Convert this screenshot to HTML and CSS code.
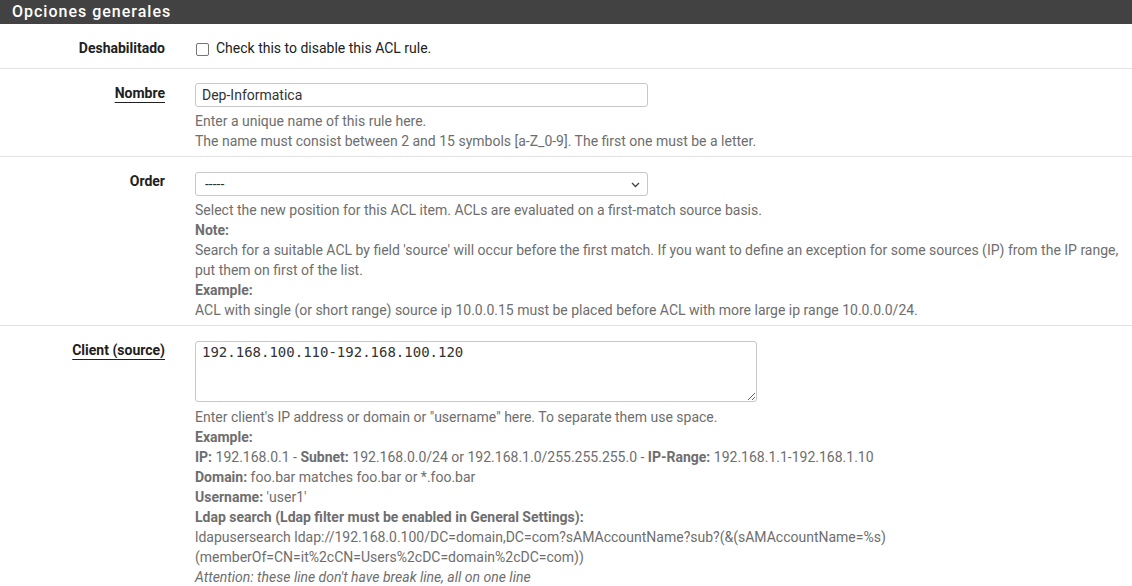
FILE: index.html
```html
<!DOCTYPE html>
<html lang="es">
<head>
<meta charset="utf-8">
<title>Opciones generales</title>
<link rel="stylesheet" href="styles.css">
</head>
<body>
<div class="panel">
  <div class="panel-heading">Opciones generales</div>
  <div class="panel-body">
    <div class="form-row">
      <div class="label-col"><span class="label">Deshabilitado</span></div>
      <div class="content-col check-col">
        <label class="check"><input type="checkbox" class="cb"> Check this to disable this ACL rule.</label>
      </div>
    </div>
    <div class="form-row">
      <div class="label-col"><span class="label req">Nombre</span></div>
      <div class="content-col">
        <input type="text" class="field" value="Dep-Informatica">
        <div class="help">
          Enter a unique name of this rule here.<br>
          The name must consist between 2 and 15 symbols [a-Z_0-9]. The first one must be a letter.
        </div>
      </div>
    </div>
    <div class="form-row">
      <div class="label-col"><span class="label">Order</span></div>
      <div class="content-col">
        <div class="select-wrap">
          <select class="field select"><option>-----</option></select>
          <svg class="chev" width="9" height="6" viewBox="0 0 9 6"><path d="M1 1l3.5 3.5L8 1" fill="none" stroke="#444" stroke-width="1.3"/></svg>
        </div>
        <div class="help">
          Select the new position for this ACL item. ACLs are evaluated on a first-match source basis.<br>
          <b>Note:</b><br>
          Search for a suitable ACL by field 'source' will occur before the first match. If you want to define an exception for some sources (IP) from the IP range, put them on first of the list.<br>
          <b>Example:</b><br>
          ACL with single (or short range) source ip 10.0.0.15 must be placed before ACL with more large ip range 10.0.0.0/24.
        </div>
      </div>
    </div>
    <div class="form-row last">
      <div class="label-col"><span class="label req">Client (source)</span></div>
      <div class="content-col">
        <textarea class="area">192.168.100.110-192.168.100.120</textarea>
        <div class="help help-area">
          Enter client's IP address or domain or "username" here. To separate them use space.<br>
          <b>Example:</b><br>
          <b>IP:</b> 192.168.0.1 - <b>Subnet:</b> 192.168.0.0/24 or 192.168.1.0/255.255.255.0 - <b>IP-Range:</b> 192.168.1.1-192.168.1.10<br>
          <b>Domain:</b> foo.bar matches foo.bar or *.foo.bar<br>
          <b>Username:</b> 'user1'<br>
          <b>Ldap search (Ldap filter must be enabled in General Settings):</b><br>
          ldapusersearch ldap://192.168.0.100/DC=domain,DC=com?sAMAccountName?sub?(&amp;(sAMAccountName=%s)(memberOf=CN=it%2cCN=Users%2cDC=domain%2cDC=com))<br>
          <i>Attention: these line don't have break line, all on one line</i>
        </div>
      </div>
    </div>
  </div>
</div>
</body>
</html>
```
FILE: styles.css
```css
html, body {
  margin: 0;
  padding: 0;
  background: #fff;
}
body {
  font-family: Roboto, "Liberation Sans", sans-serif;
  font-size: 14px;
  line-height: 20px;
  color: #212121;
}
.panel-heading {
  background: #424242;
  color: #fff;
  height: 24px;
  line-height: 24px;
  padding: 0 12px;
  font-size: 16px;
  font-weight: 500;
  letter-spacing: 1px;
}
.form-row {
  display: flex;
  padding: 14px 0 5px;
  border-bottom: 1px solid #e2e2e2;
}
.form-row.last {
  border-bottom: none;
}
.label-col {
  width: 165px;
  flex: none;
  text-align: right;
  margin-right: 30px;
}
.label {
  font-weight: 700;
  color: #212121;
}
.label.req {
  text-decoration: underline;
  text-underline-offset: 4px;
  text-decoration-thickness: 1px;
}
.content-col {
  flex: 1;
  min-width: 0;
  padding-right: 8px;
}
.check-col {
  padding-bottom: 5px;
}
.check {
  display: flex;
  align-items: center;
  height: 20px;
}
.cb {
  appearance: none;
  -webkit-appearance: none;
  width: 13px;
  height: 13px;
  margin: 3px 7px 0 1px;
  border: 1.5px solid #757575;
  border-radius: 2px;
  background: #fff;
  box-sizing: border-box;
}
.field {
  display: block;
  box-sizing: border-box;
  width: 453px;
  height: 24px;
  margin: 0;
  padding: 0 6px;
  border: 1px solid #c8c8c8;
  border-radius: 3px;
  font-family: Roboto, "Liberation Sans", sans-serif;
  font-size: 14px;
  color: #333;
  background: #fff;
}
.select-wrap {
  position: relative;
  width: 453px;
  margin-top: 1px;
}
.select {
  appearance: none;
  -webkit-appearance: none;
  font-size: 14px;
  padding-left: 9px;
}
.chev {
  position: absolute;
  right: 8px;
  top: 10px;
  pointer-events: none;
}
.area {
  display: block;
  box-sizing: border-box;
  width: 562px;
  height: 61px;
  margin: 1px 0 0;
  padding: 1px 6px;
  border: 1px solid #c8c8c8;
  border-radius: 3px;
  font-family: "DejaVu Sans Mono", monospace;
  font-size: 14px;
  line-height: 18px;
  color: #333;
  resize: vertical;
}
.help {
  margin-top: 4px;
  color: #6e6e6e;
}
.help.help-area {
  margin-top: 5px;
}
.help b {
  color: #6e6e6e;
}
```
